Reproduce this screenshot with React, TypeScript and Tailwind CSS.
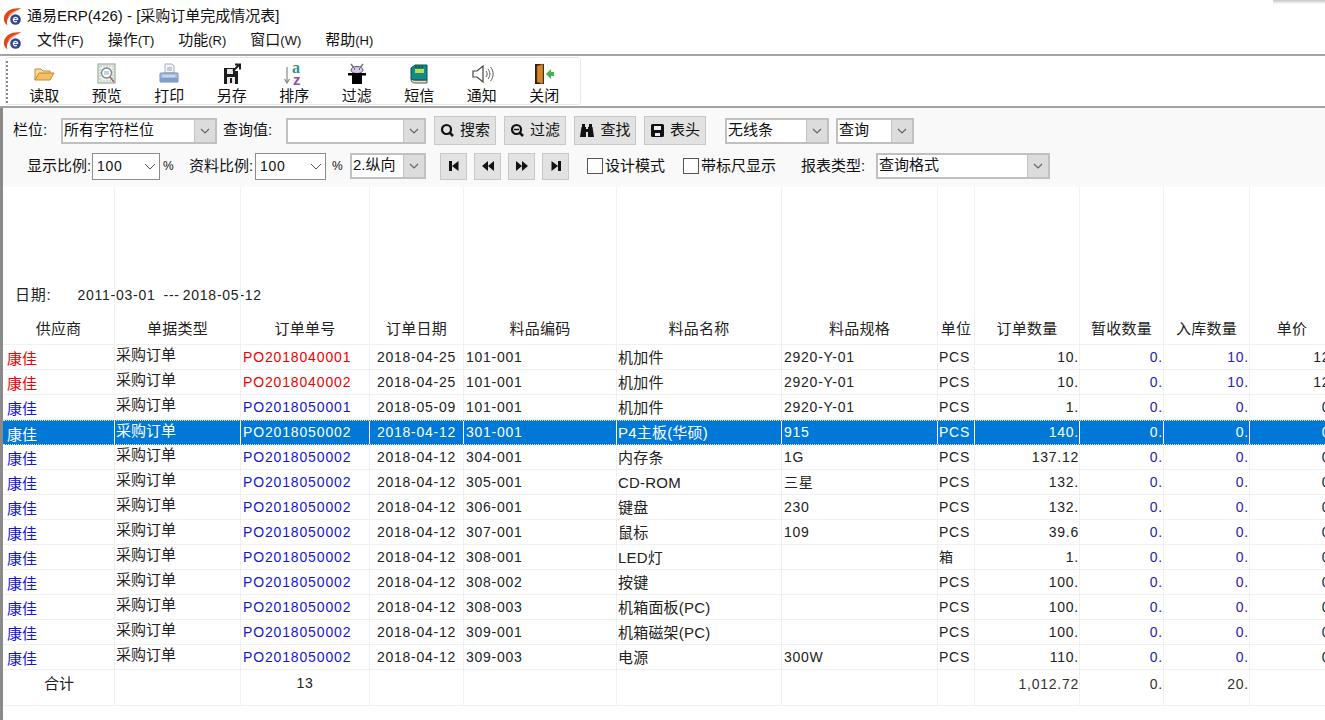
import type { ReactNode } from "react";

const font = "[font-family:'Liberation_Sans','Noto_Sans_CJK_SC',sans-serif]";
const gridCols =
  "grid grid-cols-[112px_126px_129px_94px_153px_165px_156px_37px_105px_84px_86px_85px]";

const Logo = () => (
  <svg width="20" height="20" viewBox="0 0 20 20" className="shrink-0">
    <path d="M18 1.500C10 .5 2.500 3.500 1 10.500c-.5 3 .5 6 3.500 8 -2-5 1-12 13.500-17z" fill="#e5431a" />
    <path d="M15 3C9 4 5.500 7 4.500 12c3-4 6-7 10.500-9z" fill="#f59a5e" />
    <circle cx="12.500" cy="12.500" r="5.300" fill="#2f4596" />
    <path d="M10.300 12.500h4.400a2.200 2.200 0 1 0-.7 1.800" fill="none" stroke="#fff" strokeWidth="1.200" />
  </svg>
);

const FolderIcon = () => (
  <svg width="22" height="20" viewBox="0 0 22 20">
    <path d="M2 16V5h6l2 2h7v3H6L2 16z" fill="#f7dc9c" stroke="#c08a30" />
    <path d="M2 16l4-7h15l-4 7H2z" fill="#f3bf60" stroke="#c08a30" />
  </svg>
);

const PreviewIcon = () => (
  <svg width="22" height="22" viewBox="0 0 22 22">
    <rect x="2" y="1" width="17" height="19" fill="#eef2ec" stroke="#8d9a90" />
    <rect x="4" y="3" width="13" height="15" fill="none" stroke="#b5c4b8" strokeDasharray="2 1" />
    <circle cx="10.500" cy="10" r="5" fill="#fff" stroke="#7d8a99" strokeWidth="1.400" />
    <path d="M8 9h5M8 11h5" stroke="#9aa5b0" />
    <path d="M14 14l4 5" stroke="#b06060" strokeWidth="1.600" />
  </svg>
);

const PrintIcon = () => (
  <svg width="22" height="22" viewBox="0 0 22 22">
    <path d="M7 1h7l2 2v7H7z" fill="#f2f4f8" stroke="#a5b0c4" />
    <path d="M9 5h5M9 7h5" stroke="#98a2b8" />
    <path d="M3 10h16a1 1 0 0 1 1 1v8H2v-8a1 1 0 0 1 1-1z" fill="#a8c0de" stroke="#6f8db5" />
    <path d="M2 15h18v4H2z" fill="#7f9fc8" />
    <path d="M5 13h12" stroke="#e8eef6" />
  </svg>
);

const SaveIcon = () => (
  <svg width="20" height="22" viewBox="0 0 20 22">
    <path d="M2 5h11v3h3v13H2z" fill="#1c1c1c" />
    <rect x="5" y="6" width="6" height="5" fill="#e8e8e8" />
    <rect x="5" y="14" width="8" height="7" fill="#e8e8e8" />
    <rect x="8" y="15" width="2" height="5" fill="#1c1c1c" />
    <path d="M11 8l6-6M13 1.500h5v5" fill="none" stroke="#1c1c1c" strokeWidth="2" />
  </svg>
);

const SortIcon = () => (
  <svg width="24" height="24" viewBox="0 0 24 24">
    <path d="M5 5v15M2.500 17L5 21l2.500-4" fill="none" stroke="#8a8a8a" strokeWidth="1.200" />
    <text x="10" y="11" fontSize="16" fontWeight="700" fill="#2f8f8f" fontFamily="Liberation Serif">a</text>
    <text x="11" y="23" fontSize="15" fontWeight="700" fill="#8f4fa8" fontFamily="Liberation Sans">z</text>
  </svg>
);

const FilterIcon = () => (
  <svg width="22" height="22" viewBox="0 0 22 22">
    <path d="M5 1l3 4M17 1l-3 4" stroke="#777" strokeWidth="1.500" />
    <ellipse cx="11" cy="7" rx="6" ry="3.500" fill="#d8c8ef" stroke="#555" />
    <path d="M8 6h1M13 6h1" stroke="#000" />
    <rect x="2" y="10" width="18" height="2.500" fill="#000" />
    <path d="M6 12h10v9H6z" fill="#000" />
  </svg>
);

const SmsIcon = () => (
  <svg width="22" height="22" viewBox="0 0 22 22">
    <path d="M3 16c0 3 2 4 4 4h12v-3H7c-2 0-4-1-4-1z" fill="#e6e2d0" stroke="#555" />
    <path d="M3 16V5l4-3h12v15H7c-2 0-4-1-4-1z" fill="#108a8a" stroke="#0b4f4f" />
    <path d="M7 6h9v4H7z" fill="#c6dc3a" />
    <path d="M8 3v2M11 3v2M14 3v2" stroke="#0b3030" />
  </svg>
);

const SpeakerIcon = () => (
  <svg width="24" height="22" viewBox="0 0 24 22">
    <path d="M3 8h4l6-5v16l-6-5H3z" fill="#fff" stroke="#444" strokeWidth="1.200" />
    <path d="M16 8c1.500 2 1.500 4 0 6M18 6c2.500 3 2.500 7 0 10M20.500 4c3.500 4 3.500 10 0 14" fill="none" stroke="#555" />
  </svg>
);

const DoorIcon = () => (
  <svg width="22" height="24" viewBox="0 0 22 24">
    <path d="M2 2h9v20H2z" fill="#2b2118" />
    <path d="M4 4l6-2v20l-6-2z" fill="#d9862b" stroke="#8a5212" strokeWidth=".6" />
    <path d="M13 12l5-5v3h3v4h-3v3z" fill="#43b54a" />
  </svg>
);

const SearchGlyph = ({ minus = false }: { minus?: boolean }) => (
  <svg width="15" height="15" viewBox="0 0 15 15">
    <circle cx="6.500" cy="6.500" r="4.500" fill="none" stroke="#111" strokeWidth="2.200" />
    <path d="M9.500 9.500l3.500 3.500" stroke="#111" strokeWidth="2.500" />
    {minus && <path d="M4 6.500h5" stroke="#111" strokeWidth="1.500" />}
  </svg>
);

const BinocularGlyph = () => (
  <svg width="16" height="15" viewBox="0 0 16 15">
    <path d="M3 1h3v3H3zM10 1h3v3h-3zM2.500 4h4.500v2h2V4h4.500L15 14H9V9H7v5H1z" fill="#111" />
  </svg>
);

const DiskGlyph = () => (
  <svg width="15" height="15" viewBox="0 0 15 15">
    <path d="M1 2.500A1.500 1.500 0 0 1 2.500 1h10A1.500 1.500 0 0 1 14 2.500v10a1.500 1.500 0 0 1-1.500 1.500h-10A1.500 1.500 0 0 1 1 12.500z" fill="#111" />
    <rect x="4" y="3" width="7" height="4" fill="#eee" />
    <rect x="5" y="10" width="5" height="3" fill="#eee" />
  </svg>
);

const tools: [string, ReactNode][] = [
  ["读取", <FolderIcon />],
  ["预览", <PreviewIcon />],
  ["打印", <PrintIcon />],
  ["另存", <SaveIcon />],
  ["排序", <SortIcon />],
  ["过滤", <FilterIcon />],
  ["短信", <SmsIcon />],
  ["通知", <SpeakerIcon />],
  ["关闭", <DoorIcon />],
];

const menus = [
  ["文件", "(F)"],
  ["操作", "(T)"],
  ["功能", "(R)"],
  ["窗口", "(W)"],
  ["帮助", "(H)"],
];

function Arrow() {
  return (
    <span className="flex h-full w-[21px] shrink-0 items-center justify-center border-l border-[#c4c4c4] bg-[#dcdcdc]">
      <svg width="10" height="6" viewBox="0 0 10 6">
        <path d="M1 1l4 4 4-4" fill="none" stroke="#666" strokeWidth="1.200" />
      </svg>
    </span>
  );
}

function Combo({ width, text }: { width: string; text?: string }) {
  return (
    <div className={`flex h-[26px] items-center border-2 border-[#c0c0c0] bg-white ${width}`}>
      <span className="flex-1 pb-[3px] pl-[1px] text-[15px] leading-none whitespace-nowrap text-[#111]">{text}</span>
      <Arrow />
    </div>
  );
}

function Spin({ width }: { width: string }) {
  return (
    <div className={`flex h-[27px] items-center justify-between border border-[#8c8c8c] bg-white pr-[3px] pl-[4px] ${width}`}>
      <span className="text-[14px] tracking-[0.75px] text-[#111]">100</span>
      <svg width="12" height="7" viewBox="0 0 12 7">
        <path d="M1 1l5 5 5-5" fill="none" stroke="#555" />
      </svg>
    </div>
  );
}

function ActionButton({ icon, label }: { icon: ReactNode; label: string }) {
  return (
    <button className="flex h-[29px] w-[62px] items-center justify-center gap-[5px] border border-[#c8c8c8] bg-[#e2e2e2] text-[15px] text-[#111]">
      {icon}
      <span>{label}</span>
    </button>
  );
}

function NavButton({ d }: { d: string }) {
  return (
    <button className="flex h-[27px] w-[27px] items-center justify-center border border-[#c8c8c8] bg-[#e2e2e2]">
      <svg width="14" height="14" viewBox="0 0 14 14">
        <path d={d} fill="#111" />
      </svg>
    </button>
  );
}

function Check({ label }: { label: string }) {
  return (
    <label className="flex items-center gap-[2px] text-[15px] text-[#111]">
      <span className="h-[16px] w-[16px] border border-[#555] bg-white" />
      {label}
    </label>
  );
}

const headers = ["供应商", "单据类型", "订单单号", "订单日期", "料品编码", "料品名称", "料品规格", "单位", "订单数量", "暂收数量", "入库数量", "单价"];

type Row = {
  tone: "red" | "blue";
  no: string;
  date: string;
  code: string;
  name: string;
  spec: string;
  unit: string;
  qty: string;
  stock: string;
  price: string;
};

const b = (code: string, name: string, spec: string, qty: string, unit = "PCS"): Row => ({
  tone: "blue",
  no: "PO2018050002",
  date: "2018-04-12",
  code,
  name,
  spec,
  unit,
  qty,
  stock: "0.",
  price: "0.",
});

const rows: Row[] = [
  { tone: "red", no: "PO2018040001", date: "2018-04-25", code: "101-001", name: "机加件", spec: "2920-Y-01", unit: "PCS", qty: "10.", stock: "10.", price: "12." },
  { tone: "red", no: "PO2018040002", date: "2018-04-25", code: "101-001", name: "机加件", spec: "2920-Y-01", unit: "PCS", qty: "10.", stock: "10.", price: "12." },
  { tone: "blue", no: "PO2018050001", date: "2018-05-09", code: "101-001", name: "机加件", spec: "2920-Y-01", unit: "PCS", qty: "1.", stock: "0.", price: "0." },
  b("301-001", "P4主板(华硕)", "915", "140."),
  b("304-001", "内存条", "1G", "137.12"),
  b("305-001", "CD-ROM", "三星", "132."),
  b("306-001", "键盘", "230", "132."),
  b("307-001", "鼠标", "109", "39.6"),
  b("308-001", "LED灯", "", "1.", "箱"),
  b("308-002", "按键", "", "100."),
  b("308-003", "机箱面板(PC)", "", "100."),
  b("309-001", "机箱磁架(PC)", "", "100."),
  b("309-003", "电源", "300W", "110."),
];

const selectedIndex = 3;

function DataRow({ row, selected }: { row: Row; selected: boolean }) {
  const line = selected ? "border-r border-white" : "border-r border-[#f0f0f0]";
  const tone = selected ? "text-white" : row.tone === "red" ? "text-[#f00000]" : "text-[#1515d8]";
  const dark = selected ? "text-white" : "text-[#222]";
  const qtyTone = selected ? "text-white" : "text-[#2a22b0]";
  const num = "text-[14px] tracking-[0.75px] whitespace-nowrap";
  const cell = `flex items-center overflow-hidden ${line}`;
  return (
    <div
      className={`${gridCols} h-[25px] ${
        selected ? "border-y border-dotted border-[#e8e0c8] bg-[#0078d7]" : "border-b border-[#f0f0f0]"
      }`}
    >
      <div className={`${cell} pt-[5px] pl-[4px] text-[15px] ${tone}`}>康佳</div>
      <div className={`${cell} pb-[3px] pl-[1px] text-[15px] ${dark}`}>采购订单</div>
      <div className={`${cell} pl-[2px] text-[14px] tracking-[0.85px] whitespace-nowrap ${tone}`}>{row.no}</div>
      <div className={`${cell} justify-center ${num} ${dark}`}>{row.date}</div>
      <div className={`${cell} pl-[2px] ${num} ${dark}`}>{row.code}</div>
      <div className={`${cell} pt-[2px] pl-[1px] text-[15px] tracking-[0.2px] ${dark}`}>{row.name}</div>
      <div className={`${cell} pl-[2px] ${num} ${dark}`}>{row.spec}</div>
      <div className={`${cell} pl-[1px] ${num} ${dark}`}>{row.unit}</div>
      <div className={`${cell} justify-end ${num} ${dark}`}>{row.qty}</div>
      <div className={`${cell} justify-end ${num} ${qtyTone}`}>0.</div>
      <div className={`${cell} justify-end ${num} ${qtyTone}`}>{row.stock}</div>
      <div className={`flex items-center justify-end ${num} ${dark}`}>{row.price}</div>
    </div>
  );
}

export default function App() {
  const line = "border-r border-[#f0f0f0]";
  return (
    <div className={`h-[720px] w-[1325px] overflow-hidden bg-white ${font}`}>
      {/* title + menu */}
      <div className="flex h-[28px] items-start pl-[3px] text-[15px] leading-[20px] text-[#111]">
        <div className="mt-[6px] flex items-center gap-[4px]">
          <Logo />
          <span className="pb-[1px]">通易ERP(426) - [采购订单完成情况表]</span>
        </div>
        <div className="ml-auto h-[4px] w-[52px] bg-gradient-to-b from-[#c4c4c4] to-white" />
      </div>
      <div className="flex h-[26px] items-center pl-[3px] text-[#111]">
        <Logo />
        <div className="mb-[2px] ml-[14px] flex gap-[24px]">
          {menus.map(([a, k]) => (
            <span key={a} className="text-[15px]">
              {a}
              <span className="text-[13px]">{k}</span>
            </span>
          ))}
        </div>
      </div>

      {/* toolbar */}
      <div className="h-[54px] border-y-2 border-[#a3a3a3] bg-white pt-[1px] pl-[5px]">
        <div className="flex h-[48px] w-[576px] rounded-[3px] border border-[#e8e8e8]">
          <div className="mt-[3px] h-[42px] w-[2px] border-l-2 border-dotted border-[#888]" />
          <div className="ml-[5px] flex">
            {tools.map(([label, icon]) => (
              <div key={label} className="flex w-[62.500px] flex-col items-center">
                <div className="flex h-[29px] items-center justify-center pt-[3px]">{icon}</div>
                <span className="text-[15px] leading-[17px] text-[#111]">{label}</span>
              </div>
            ))}
          </div>
        </div>
      </div>

      {/* body with thick left edge */}
      <div className="h-[612px] border-l-[3px] border-[#8a8a8a]">
        <div className="h-[79px] bg-[#f9f9f9] pt-[8px] pl-[10px] text-[15px] text-[#111]">
          <div className="flex h-[29px] items-center">
            <span className="w-[48px]">栏位:</span>
            <Combo width="w-[156px]" text="所有字符栏位" />
            <span className="ml-[6px] w-[63px]">查询值:</span>
            <Combo width="w-[140px]" />
            <div className="ml-[8px] flex gap-[8px]">
              <ActionButton icon={<SearchGlyph />} label="搜索" />
              <ActionButton icon={<SearchGlyph minus />} label="过滤" />
              <ActionButton icon={<BinocularGlyph />} label="查找" />
              <ActionButton icon={<DiskGlyph />} label="表头" />
            </div>
            <Combo width="ml-[19px] w-[104px]" text="无线条" />
            <Combo width="ml-[7px] w-[78px]" text="查询" />
          </div>
          <div className="mt-[7px] flex h-[28px] items-center">
            <span className="ml-[14px] w-[65px] whitespace-nowrap">显示比例:</span>
            <Spin width="w-[68px]" />
            <span className="ml-[3px] w-[26px] text-[12px]">%</span>
            <span className="w-[66px] whitespace-nowrap">资料比例:</span>
            <Spin width="w-[71px]" />
            <span className="ml-[6px] w-[18px] text-[12px]">%</span>
            <Combo width="w-[76px]" text="2.纵向" />
            <div className="ml-[14px] flex gap-[7px]">
              <NavButton d="M2 2h3v10H2zM11.500 2v10L5 7z" />
              <NavButton d="M7 2v10L1 7zM13 2v10L7 7z" />
              <NavButton d="M1 2v10l6-5zM7 2v10l6-5z" />
              <NavButton d="M2.500 2v10L9 7zM9 2h3v10H9z" />
            </div>
            <div className="ml-[18px]">
              <Check label="设计模式" />
            </div>
            <div className="ml-[18px]">
              <Check label="带标尺显示" />
            </div>
            <span className="ml-[25px] w-[75px] whitespace-nowrap">报表类型:</span>
            <Combo width="w-[174px]" text="查询格式" />
          </div>
        </div>

        {/* report */}
        <div className="bg-white text-[#222]">
          <div className={`${gridCols} h-[131px]`}>
            <div className={`${line} flex items-end whitespace-nowrap pb-[12px] pl-[12px] text-[14px] tracking-[0.75px]`}>
              <span className="text-[15px]">日期:</span>
              <span className="ml-[26px]">2011-03-01</span>
              <span className="ml-[8px]">---</span>
              <span className="ml-[3px]">2018-05-12</span>
            </div>
            {headers.slice(1).map((h) => (
              <div key={h} className={line} />
            ))}
          </div>
          <div className={`${gridCols} h-[27px] border-b border-[#f0f0f0]`}>
            {headers.map((h) => (
              <div key={h} className={`${line} flex items-center justify-center pb-[3px] text-[15px] tracking-[0.2px]`}>
                {h}
              </div>
            ))}
          </div>
          {rows.map((row, i) => (
            <DataRow key={i} row={row} selected={i === selectedIndex} />
          ))}
          <div className={`${gridCols} h-[36px] border-b border-[#f0f0f0]`}>
            <div className={`${line} pl-[41px] text-[15px] leading-[28px]`}>合计</div>
            <div className={line} />
            <div className={`${line} text-center text-[14px] leading-[26px] tracking-[0.75px]`}>13</div>
            {["", "", "", "", "", "1,012.72", "0.", "20.", ""].map((v, i) => (
              <div
                key={i}
                className={`${i < 8 ? line : ""} text-right text-[14px] leading-[28px] tracking-[0.75px] text-[#333]`}
              >
                {v}
              </div>
            ))}
          </div>
        </div>
      </div>
    </div>
  );
}
